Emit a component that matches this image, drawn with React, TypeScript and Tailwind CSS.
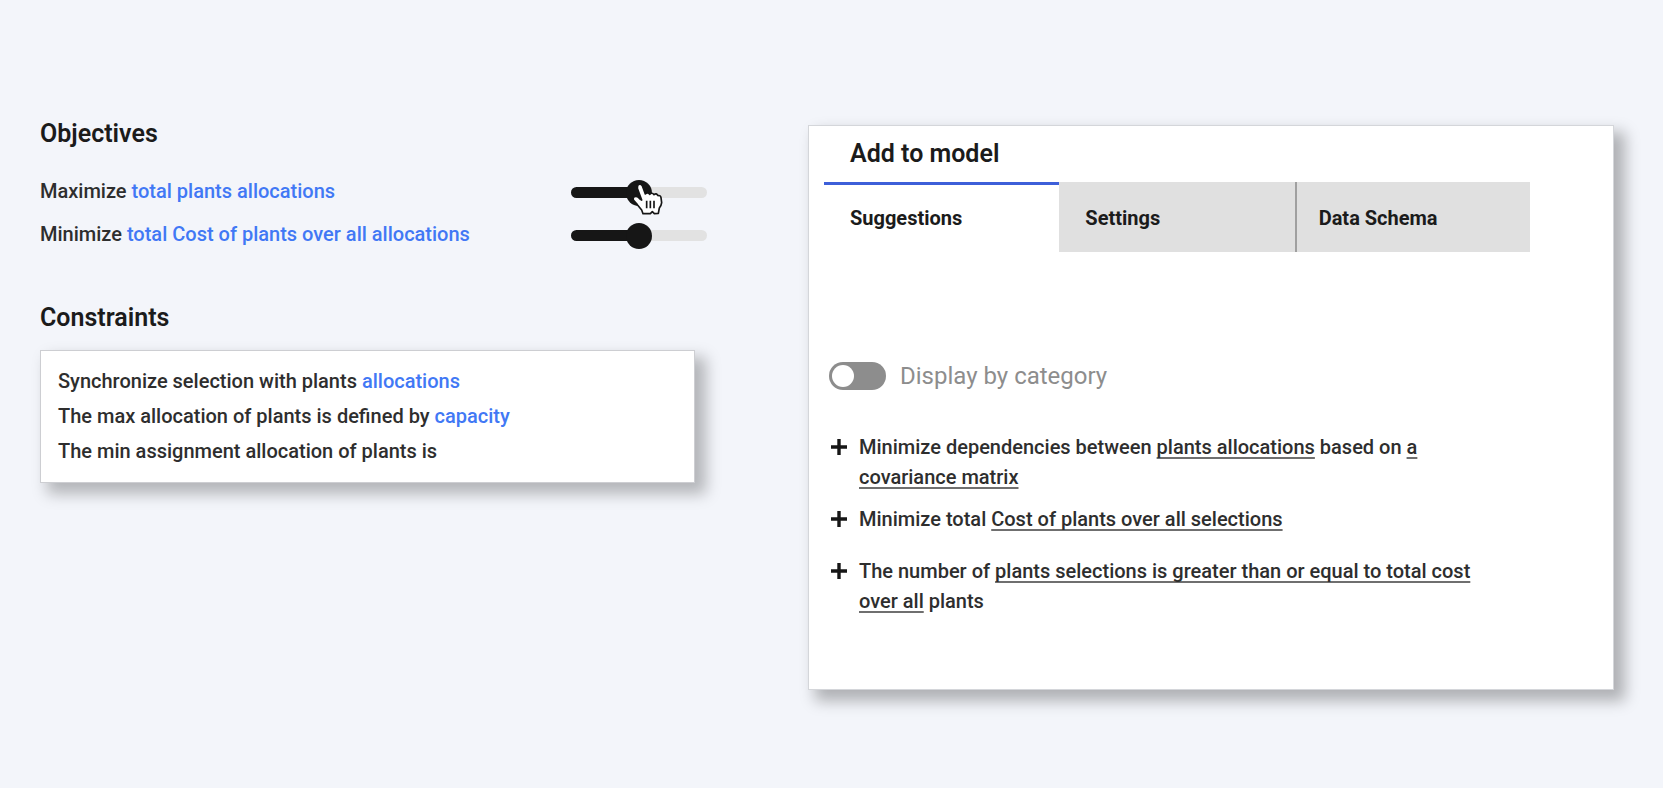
import { useState, type ReactNode } from "react";

function Term({ children }: { children: ReactNode }) {
  return (
    <a href="#term" className="text-[#4178f5]">
      {children}
    </a>
  );
}

function Slot({ children }: { children: ReactNode }) {
  return (
    <a
      href="#slot"
      className="underline decoration-[#6f6f6f] decoration-2 underline-offset-3 [text-decoration-skip-ink:none]"
    >
      {children}
    </a>
  );
}

function HandCursor() {
  return (
    <svg
      viewBox="0 0 102 102"
      className="pointer-events-none absolute top-[11px] left-[60px] size-[34px]"
      aria-hidden="true"
    >
      <path
        d="M20 10 Q27 2 34 11 L43 36 Q50 29 56 37 Q63 30 69 38 Q76 32 81 41 Q89 39 90 47 L92 62 Q91 71 85 78 L82 94 L70 95 L64 89 L58 95 L36 95 L32 84 L19 68 L7 54 Q5 44 14 43 Q20 42 27 51 L32 54 L19 19 Z"
        fill="#fff"
        stroke="#161616"
        strokeWidth="5"
        strokeLinejoin="round"
      />
      <path d="M47 56 V79 M58 56 V79 M69 56 V79" stroke="#161616" strokeWidth="5" fill="none" />
    </svg>
  );
}

function Objective({ id, children, hovered }: { id: string; children: ReactNode; hovered?: boolean }) {
  const [value, setValue] = useState(50);
  return (
    <div className="flex h-[43px] items-center justify-between">
      <label htmlFor={id} className="pb-[3px]">
        {children}
      </label>
      <div className="relative flex h-full w-[136px] items-center">
        <input
          id={id}
          type="range"
          value={value}
          onChange={(e) => setValue(Number(e.target.value))}
          style={{ backgroundSize: `${value}% 100%` }}
          className="h-[11px] w-full appearance-none rounded-full bg-[#e2e2e2] bg-linear-to-r from-[#161616] to-[#161616] bg-no-repeat [&::-webkit-slider-thumb]:size-[26px] [&::-webkit-slider-thumb]:appearance-none [&::-webkit-slider-thumb]:rounded-full [&::-webkit-slider-thumb]:bg-[#161616]"
        />
        {hovered && <HandCursor />}
      </div>
    </div>
  );
}

function Suggestion({ children }: { children: ReactNode }) {
  return (
    <li className="flex items-start gap-3">
      <button type="button" aria-label="Add" className="flex h-[30px] items-center">
        <svg viewBox="0 0 16 16" className="size-4" aria-hidden="true">
          <path d="M8 0V16M0 8H16" stroke="#161616" strokeWidth="3.4" />
        </svg>
      </button>
      <p>{children}</p>
    </li>
  );
}

const tabs = ["Suggestions", "Settings", "Data Schema"];
const tabStyles = [
  "border-t-3 border-[#3d5fd9] bg-white pb-[2px] pl-[26px]",
  "bg-[#e0e0e0] pt-px pl-[26px]",
  "border-l-2 border-[#a0a0a0] bg-[#e0e0e0] pt-px pl-[22px]",
];

export default function App() {
  const [byCategory, setByCategory] = useState(false);
  return (
    <main className="grid min-h-screen grid-cols-[667fr_806fr] items-start gap-[101px] bg-[#f3f5fa] pt-[112px] pr-[49px] pb-24 pl-10 font-['Roboto','Liberation_Sans',sans-serif] text-[20px] font-medium text-[#2e2e2e]">
      <div>
        <h2 className="text-[25px] leading-[44px] font-semibold text-[#1b1b1b]">Objectives</h2>
        <div className="mt-[15px]">
          <Objective id="maximize" hovered>
            Maximize <Term>total plants allocations</Term>
          </Objective>
          <Objective id="minimize">
            Minimize <Term>total Cost of plants over all allocations</Term>
          </Objective>
        </div>
        <h2 className="mt-[39px] text-[25px] leading-[44px] font-semibold text-[#1b1b1b]">Constraints</h2>
        <ul className="mt-[10px] mr-3 border border-[#cdced2] bg-white py-[13px] pl-[17px] leading-[35px] shadow-[9px_9px_14px_2px_rgba(0,0,0,0.26)]">
          <li>
            Synchronize selection with plants <Term>allocations</Term>
          </li>
          <li>
            The max allocation of plants is defined by <Term>capacity</Term>
          </li>
          <li>The min assignment allocation of plants is</li>
        </ul>
      </div>

      <section className="mt-[13px] border border-[#d4d6da] bg-white pr-[83px] pb-[73px] pl-[15px] shadow-[9px_9px_14px_2px_rgba(0,0,0,0.28)]">
        <h2 className="pl-[26px] text-[25px] leading-[56px] font-semibold text-[#1b1b1b]">Add to model</h2>
        <div role="tablist" className="grid grid-cols-3">
          {tabs.map((tab, i) => (
            <button
              key={tab}
              type="button"
              role="tab"
              aria-selected={i === 0}
              className={`h-[70px] text-left font-bold text-[#1b1b1b] ${tabStyles[i]}`}
            >
              {tab}
            </button>
          ))}
        </div>
        <label className="mt-[106px] ml-[5px] flex items-center gap-[14px] text-[24px] leading-9 font-normal text-[#8d8d8d]">
          <input
            type="checkbox"
            role="switch"
            checked={byCategory}
            onChange={(e) => setByCategory(e.target.checked)}
            className="h-7 w-[57px] appearance-none rounded-full bg-[#8d8d8d] p-[3px] before:block before:size-[22px] before:rounded-full before:bg-white checked:before:ml-auto"
          />
          Display by category
        </label>
        <ul className="mt-[38px] ml-[7px] pr-7 leading-[30px]">
          <Suggestion>
            Minimize dependencies between <Slot>plants allocations</Slot> based on <Slot>a covariance matrix</Slot>
          </Suggestion>
          <div className="contents [&>li]:my-3 [&>li]:mb-[22px]">
            <Suggestion>
              Minimize total <Slot>Cost of plants over all selections</Slot>
            </Suggestion>
          </div>
          <Suggestion>
            The number of <Slot>plants selections is greater than or equal to total cost over all</Slot> plants
          </Suggestion>
        </ul>
      </section>
    </main>
  );
}
